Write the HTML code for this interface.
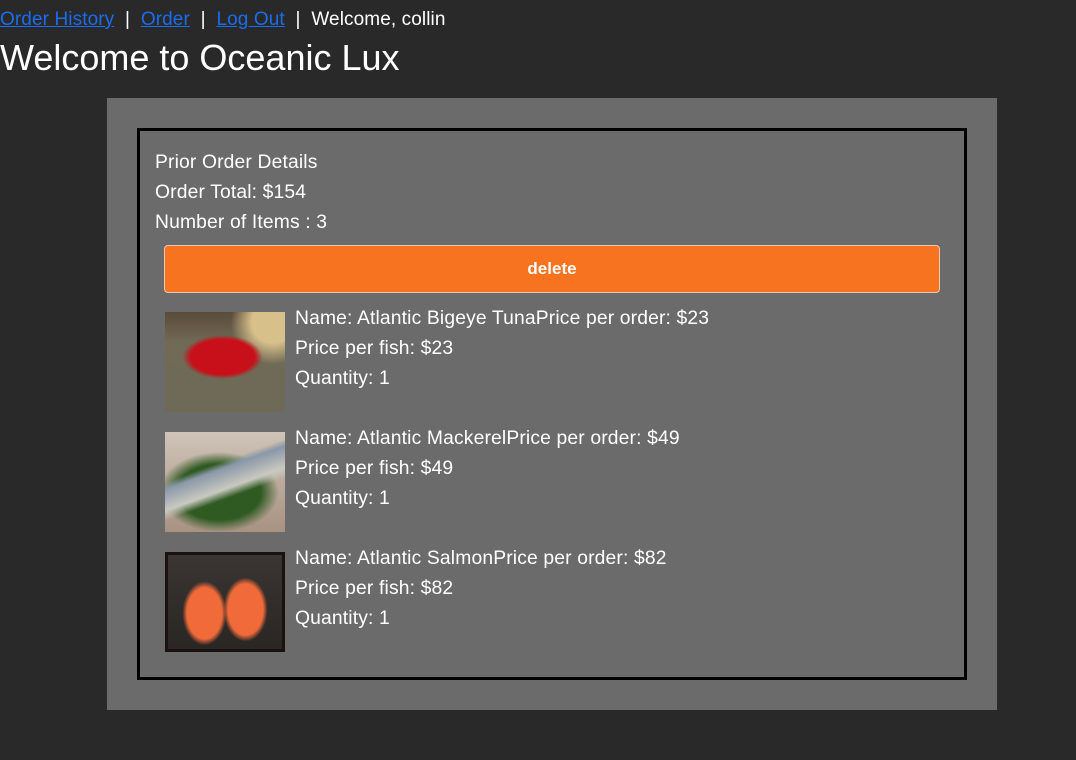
<!DOCTYPE html>
<html><head><style>
body{margin:0;background:#292929;color:#fff;font-family:"Liberation Sans",sans-serif;width:1076px;height:760px;overflow:hidden;position:relative}
.nav{position:absolute;left:0;top:8px;font-size:19px;line-height:24px;white-space:nowrap;letter-spacing:0.1px}
.nav a{color:#1a6cf0;text-decoration:underline}
h1{position:absolute;left:0;top:36px;margin:0;font-size:36px;font-weight:normal;line-height:44px}
.outer{position:absolute;left:107px;top:98px;width:890px;height:612px;background:#6b6b6b}
.inner{position:absolute;left:30px;top:30px;width:824px;height:546px;border:3px solid #000}
.t{position:absolute;font-size:19.3px;line-height:30px;white-space:nowrap;letter-spacing:0.15px;margin-top:2px}
.btn{position:absolute;left:24px;top:114px;width:774px;height:46px;background:#f8731f;border:1px solid #e8c8b0;border-radius:4px;text-align:center;line-height:46px;font-weight:bold;font-size:17px}
.img{position:absolute;left:25px;width:120px;height:100px}
</style></head><body>
<div class="nav"><a>Order History</a> &nbsp;|&nbsp; <a>Order</a> &nbsp;|&nbsp; <a>Log Out</a> &nbsp;|&nbsp; Welcome, collin</div>
<h1>Welcome to Oceanic Lux</h1>
<div class="outer"><div class="inner">
<div class="t" style="left:15px;top:15px">Prior Order Details</div>
<div class="t" style="left:15px;top:45px">Order Total: $154</div>
<div class="t" style="left:15px;top:75px">Number of Items : 3</div>
<div class="btn">delete</div>

<div class="img" style="top:181px;background:radial-gradient(ellipse 40px 22px at 48% 45%,#c8101a 80%,transparent 100%),radial-gradient(circle at 90% 10%,#d8c08a 15%,transparent 30%),linear-gradient(#5a4a3a,#706a55 30%,#6e6a58)"></div>
<div class="t" style="left:155px;top:171px">Name: Atlantic Bigeye TunaPrice per order: $23</div>
<div class="t" style="left:155px;top:201px">Price per fish: $23</div>
<div class="t" style="left:155px;top:231px">Quantity: 1</div>

<div class="img" style="top:301px;background:linear-gradient(160deg,transparent 35%,#8a98a8 40%,#c9c9c0 55%,transparent 62%),radial-gradient(ellipse 60px 40px at 45% 60%,#2f5a22 70%,transparent 100%),linear-gradient(#cfc4b8,#a89282)"></div>
<div class="t" style="left:155px;top:291px">Name: Atlantic MackerelPrice per order: $49</div>
<div class="t" style="left:155px;top:321px">Price per fish: $49</div>
<div class="t" style="left:155px;top:351px">Quantity: 1</div>

<div class="img" style="top:421px;box-sizing:border-box;border:3px solid #1a1210;background:radial-gradient(ellipse 22px 32px at 32% 62%,#f06a3a 80%,transparent 100%),radial-gradient(ellipse 22px 32px at 68% 58%,#f06a3a 80%,transparent 100%),linear-gradient(#3a3532,#2a2624)"></div>
<div class="t" style="left:155px;top:411px">Name: Atlantic SalmonPrice per order: $82</div>
<div class="t" style="left:155px;top:441px">Price per fish: $82</div>
<div class="t" style="left:155px;top:471px">Quantity: 1</div>
</div></div>
</body></html>
